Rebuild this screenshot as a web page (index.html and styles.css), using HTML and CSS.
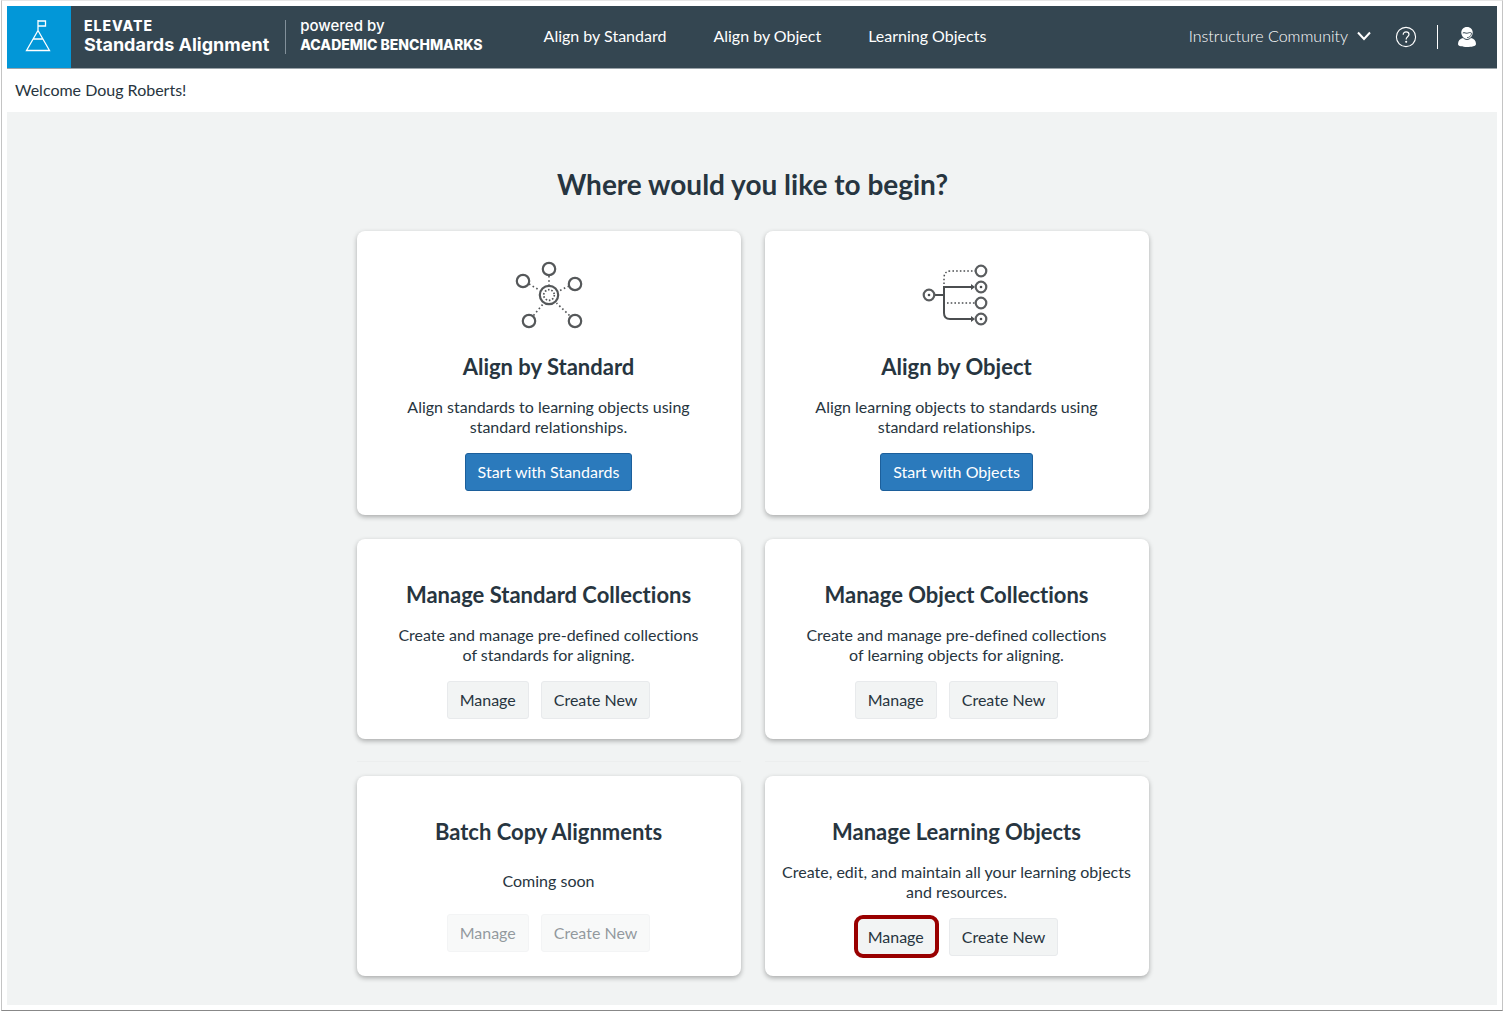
FILE: index.html
```html
<!DOCTYPE html>
<html lang="en">
<head>
  <meta charset="UTF-8" />
  <meta name="viewport" content="width=device-width, initial-scale=1.0"/>
  <title>Elevate Standards Alignment</title>
  <link rel="stylesheet" href="styles.css">
</head>
<body>
  <div class="frame">
    <!-- Top navigation -->
    <header class="topbar">
      <a href="#" class="logo" aria-label="Home">
        <svg width="32" height="40" viewBox="0 0 32 40" fill="none" stroke="#fff" stroke-width="1.3">
          <path d="M16 13.500V3M16 4H23.500V9H16M16 13.500L27.500 33.500H4.500ZM11 22H21"/>
        </svg>
      </a>
      <div class="brand">
        <span class="brand-elevate">ELEVATE</span>
        <span class="brand-product">Standards Alignment</span>
      </div>
      <div class="powered">
        <span class="powered-by">powered by</span>
        <span class="powered-name">ACADEMIC BENCHMARKS</span>
      </div>

      <nav class="main-nav">
        <a href="#">Align by Standard</a>
        <a href="#">Align by Object</a>
        <a href="#">Learning Objects</a>
      </nav>

      <div class="account">
        <button type="button" class="account-menu">
          Instructure Community
          <svg width="14" height="10" viewBox="0 0 14 10" fill="none" stroke="#fff" stroke-width="2">
            <path d="M1 1.500L7 8L13 1.500"/>
          </svg>
        </button>
        <button type="button" class="icon-button" aria-label="Help">
          <svg width="22" height="22" viewBox="0 0 22 22" fill="none" stroke="#fff" stroke-width="1.1">
            <circle cx="11" cy="11" r="9.600"/>
            <path stroke-width="1.2" d="M8.200 8.700C8.200 6.900 9.400 5.800 11.100 5.800S14 6.900 14 8.500C14 10.600 11.200 10.800 11.200 13V13.600"/>
            <circle cx="11.200" cy="15.800" r=".5" fill="#fff"/>
          </svg>
        </button>
        <span class="account-divider"></span>
        <button type="button" class="icon-button" aria-label="Profile">
          <svg width="20" height="22" viewBox="0 0 20 22" fill="#fff">
            <path d="M10 1C6.300 1 4.300 3.500 4.300 6.600C4.300 10 6.800 13 10 13S15.700 10 15.700 6.600C15.700 3.500 13.700 1 10 1Z"/>
            <path d="M1 18C1 14.500 3 12.600 6 12C7.200 13.300 8.500 14 10 14S12.800 13.300 14 12C17 12.600 19 14.500 19 18C19 20.300 14.500 21 10 21S1 20.300 1 18Z"/>
            <path d="M5.800 7C7.500 6 8.600 7.600 10.300 7.200S12.800 6 14.600 7.200" fill="none" stroke="#344651"/>
            <path d="M14.600 7.200C14.300 9.800 12.600 11.600 10 11.600" fill="none" stroke="#344651" stroke-width=".8"/>
          </svg>
        </button>
      </div>
    </header>

    <p class="welcome">Welcome Doug Roberts!</p>

    <main class="content">
      <h1>Where would you like to begin?</h1>

      <div class="cards">
        <!-- Alignment -->
        <section class="card card-start">
          <svg class="card-icon" width="72" height="72" viewBox="0 0 72 72" fill="none" stroke="#55585a" stroke-width="2.2">
            <g stroke-dasharray="1.600 2.600" stroke-width="1.700">
              <path d="M36 17V26M16 25L27 31.500M56 27L45 32.500M20.500 56.500L30.500 44.500M56.500 56.500L43.500 44"/>
              <circle cx="36" cy="36" r="5.300" stroke-dasharray="1.600 1.730"/>
            </g>
            <circle cx="36" cy="36" r="9.200"/>
            <circle cx="36" cy="10" r="6.200"/>
            <circle cx="10" cy="22" r="6.200"/>
            <circle cx="62" cy="25" r="6.200"/>
            <circle cx="16" cy="62" r="6.200"/>
            <circle cx="62" cy="62" r="6.200"/>
          </svg>
          <h2>Align by Standard</h2>
          <p>Align standards to learning objects using standard relationships.</p>
          <div class="actions">
            <button type="button" class="btn btn-primary">Start with Standards</button>
          </div>
        </section>

        <section class="card card-start">
          <svg class="card-icon" width="72" height="72" viewBox="0 0 72 72" fill="none" stroke="#4b4e50" stroke-width="2">
            <path d="M14 36H23M50 28H23V54Q23 60 29 60H50"/>
            <path d="M23 25V19Q23 12 30 12H54M26 44H54" stroke-width="1.500" stroke-dasharray="1.600 2.100"/>
            <path d="M50 25L54 28L50 31ZM50 57L54 60L50 63Z" fill="#4b4e50" stroke="none"/>
            <g stroke="#5a5d5f" stroke-width="2.2">
              <circle cx="8" cy="36" r="5.300"/>
              <circle cx="60" cy="12" r="5.300"/>
              <circle cx="60" cy="28" r="5.300"/>
              <circle cx="60" cy="44" r="5.300"/>
              <circle cx="60" cy="60" r="5.300"/>
            </g>
            <g fill="#4b4e50" stroke="none">
              <circle cx="8" cy="36" r="1.300"/>
              <circle cx="60" cy="28" r="1.300"/>
              <circle cx="60" cy="60" r="1.300"/>
            </g>
          </svg>
          <h2>Align by Object</h2>
          <p>Align learning objects to standards using standard relationships.</p>
          <div class="actions">
            <button type="button" class="btn btn-primary">Start with Objects</button>
          </div>
        </section>

        <!-- Collections -->
        <section class="card">
          <h2>Manage Standard Collections</h2>
          <p>Create and manage pre-defined collections of standards for aligning.</p>
          <div class="actions">
            <button type="button" class="btn">Manage</button>
            <button type="button" class="btn">Create New</button>
          </div>
        </section>

        <section class="card">
          <h2>Manage Object Collections</h2>
          <p>Create and manage pre-defined collections of learning objects for aligning.</p>
          <div class="actions">
            <button type="button" class="btn">Manage</button>
            <button type="button" class="btn">Create New</button>
          </div>
        </section>
      </div>

      <div class="cards-divider"><span></span><span></span></div>

      <!-- Batch copy and learning objects -->
      <div class="cards">
        <section class="card card-soon">
          <h2>Batch Copy Alignments</h2>
          <p>Coming soon</p>
          <div class="actions">
            <button type="button" class="btn" disabled>Manage</button>
            <button type="button" class="btn" disabled>Create New</button>
          </div>
        </section>

        <section class="card card-wide-text">
          <h2>Manage Learning Objects</h2>
          <p>Create, edit, and maintain all your learning objects and resources.</p>
          <div class="actions">
            <button type="button" class="btn btn-highlight">Manage</button>
            <button type="button" class="btn">Create New</button>
          </div>
        </section>
      </div>
    </main>
  </div>
</body>
</html>
```

FILE: styles.css
```css
:root {
  --bar: #344651;
  --blue: #0297d8;
  --primary: #2b7abc;
  --text: #273540;
  --panel: #f1f3f3;
  --brand-font: Inter, "Open Sans", sans-serif;
}

* {
  box-sizing: border-box;
}

body {
  margin: 0 1px 2px;
  background: #fff;
  font-family: Lato, "Open Sans", sans-serif;
  font-size: 16px;
  line-height: 20px;
  font-variant-ligatures: none;
  color: var(--text);
}

h1, h2, p {
  margin: 0;
}

button {
  font: inherit;
  font-variant-ligatures: none;
  cursor: pointer;
}

.frame {
  display: flex;
  flex-direction: column;
  min-height: calc(100vh - 2px);
  padding: 5px;
  border: 1px solid #c4c4c4;
  border-top-color: #e6e6e6;
  border-bottom-color: #888;
  background: #fff;
  box-shadow: 0 1px 1px #c4c4c4;
}

/* Top bar */
.topbar {
  display: flex;
  align-items: center;
  height: 62px;
  background: var(--bar);
  box-shadow: 0 1px 0 #9aa3a9;
  color: #fff;
  white-space: nowrap;
}

.logo {
  display: flex;
  align-items: center;
  justify-content: center;
  width: 64px;
  height: 62px;
  padding-right: 3px;
  background: var(--blue);
}

.brand,
.powered {
  display: flex;
  flex-direction: column;
  font-family: var(--brand-font);
}

.brand {
  padding: 0 16px 2px 13px;
}

.brand-elevate {
  font-size: 14px;
  line-height: 18px;
  font-weight: 800;
  letter-spacing: 1px;
}

.brand-product {
  font-size: 18px;
  font-weight: 700;
}

.powered {
  padding-left: 14px;
  border-left: 1px solid #82909a;
  line-height: 18px;
}

.powered-by {
  margin-top: -4px;
  font-size: 15px;
  font-weight: 500;
  line-height: 20px;
}

.powered-name {
  font-size: 14px;
  font-weight: 800;
}

.main-nav {
  display: flex;
  gap: 47px;
  margin-left: 61px;
  padding-bottom: 2px;
}

.main-nav a {
  color: #fff;
  text-decoration: none;
}

.account {
  display: flex;
  align-items: center;
  margin-left: auto;
  padding-right: 20px;
}

.account-menu,
.icon-button {
  display: flex;
  align-items: center;
  padding: 0;
  border: 0;
  background: none;
  color: #fff;
}

.account-menu {
  gap: 9px;
  margin-right: 24px;
  padding-bottom: 2px;
  font-weight: 300;
}

.account-divider {
  width: 1px;
  height: 24px;
  margin: 0 19px 0 20px;
  background: #fff;
}

.welcome {
  padding: 12px 8px;
}

/* Landing panel */
.content {
  flex: 1;
  padding: 55px 24px 29px 25px;
  background: var(--panel);
}

h1 {
  margin-bottom: 30px;
  font-size: 28px;
  line-height: 34px;
  text-align: center;
}

.cards,
.cards-divider {
  display: grid;
  grid-template-columns: 1fr 1fr;
  gap: 24px;
  max-width: 792px;
  margin: 0 auto;
}

.cards-divider {
  margin: 22px auto 14px;
}

.cards-divider span {
  height: 1px;
  background: #eceeee;
}

.card {
  display: flex;
  flex-direction: column;
  align-items: center;
  padding: 43px 16px 20px;
  border-radius: 8px;
  background: #fff;
  box-shadow: 0 2px 5px rgba(0, 0, 0, 0.3);
  text-align: center;
}

.card h2 {
  margin-bottom: 17px;
  font-size: 22px;
  line-height: 26px;
}

.card p {
  max-width: 310px;
  margin-bottom: 16px;
}

.card-start {
  padding: 28px 16px 24px;
}

.card-icon {
  margin-bottom: 23px;
}

.card-wide-text p {
  max-width: 352px;
}

.card-soon h2 {
  margin-bottom: 26px;
}

.card-soon p {
  margin-bottom: 23px;
}

.actions {
  display: flex;
  gap: 12px;
}

/* Buttons */
.btn {
  position: relative;
  height: 38px;
  padding: 0 12px 1px;
  border: 1px solid #e8eaec;
  border-radius: 3px;
  background: #f2f4f4;
  color: var(--text);
}

.btn-primary {
  border-color: #1c5f9b;
  background: var(--primary);
  color: #fff;
}

.btn:disabled {
  opacity: 0.5;
  cursor: default;
}

.btn-highlight::after {
  content: '';
  position: absolute;
  inset: -4px -3px -3px -2px;
  border: 4px solid #900;
  border-radius: 9px;
}

/* Smaller screens */
@media (max-width: 1150px) {
  .topbar {
    flex-wrap: wrap;
    height: auto;
  }
}

@media (max-width: 700px) {
  .cards {
    grid-template-columns: 1fr;
  }
}
```
